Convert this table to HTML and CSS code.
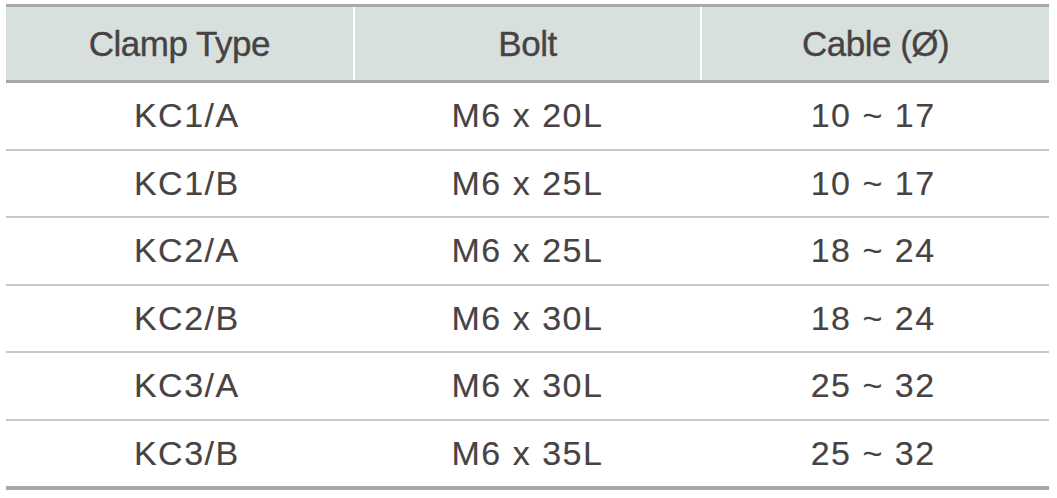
FILE: index.html
```html
<!DOCTYPE html>
<html>
<head>
<meta charset="utf-8">
<link rel="stylesheet" href="styles.css">
</head>
<body>
<div class="wrap">
<table class="spec">
  <thead>
    <tr><th>Clamp Type</th><th>Bolt</th><th>Cable (Ø)</th></tr>
  </thead>
  <tbody>
    <tr><td>KC1/A</td><td>M6 x 20L</td><td>10 ~ 17</td></tr>
    <tr><td>KC1/B</td><td>M6 x 25L</td><td>10 ~ 17</td></tr>
    <tr><td>KC2/A</td><td>M6 x 25L</td><td>18 ~ 24</td></tr>
    <tr><td>KC2/B</td><td>M6 x 30L</td><td>18 ~ 24</td></tr>
    <tr><td>KC3/A</td><td>M6 x 30L</td><td>25 ~ 32</td></tr>
    <tr><td>KC3/B</td><td>M6 x 35L</td><td>25 ~ 32</td></tr>
  </tbody>
</table>
</div>
</body>
</html>
```
FILE: styles.css
```css
html, body { margin: 0; padding: 0; background: #ffffff; }
.wrap { padding: 4px 8px 0 6px; }
.spec {
  width: 1043px;
  border-collapse: collapse;
  table-layout: fixed;
  font-family: "Liberation Sans", Arial, Helvetica, sans-serif;
  color: #474243;
  border-top: 3px solid #a8a8a8;
  border-bottom: 4px solid #a8a8a8;
}
.spec th {
  background: #d7e0dd;
  height: 73px;
  padding: 0;
  font-weight: normal;
  font-size: 35px;
  letter-spacing: -0.5px;
  text-align: center;
  -webkit-text-stroke: 0.35px #474243;
  border-bottom: 3px solid #a8a8a8;
  border-left: 2px solid #ffffff;
}
.spec th:first-child { border-left: none; }
.spec td {
  height: 65.5px;
  padding: 0;
  font-size: 34px;
  letter-spacing: 1.5px;
  text-align: center;
  -webkit-text-stroke: 0.15px #474243;
  border-bottom: 2px solid #c8c8c8;
}
.spec td:first-child { padding-left: 14px; }
.spec td:last-child { padding-right: 4px; }
.spec tbody tr:last-child td { border-bottom: none; }
```
